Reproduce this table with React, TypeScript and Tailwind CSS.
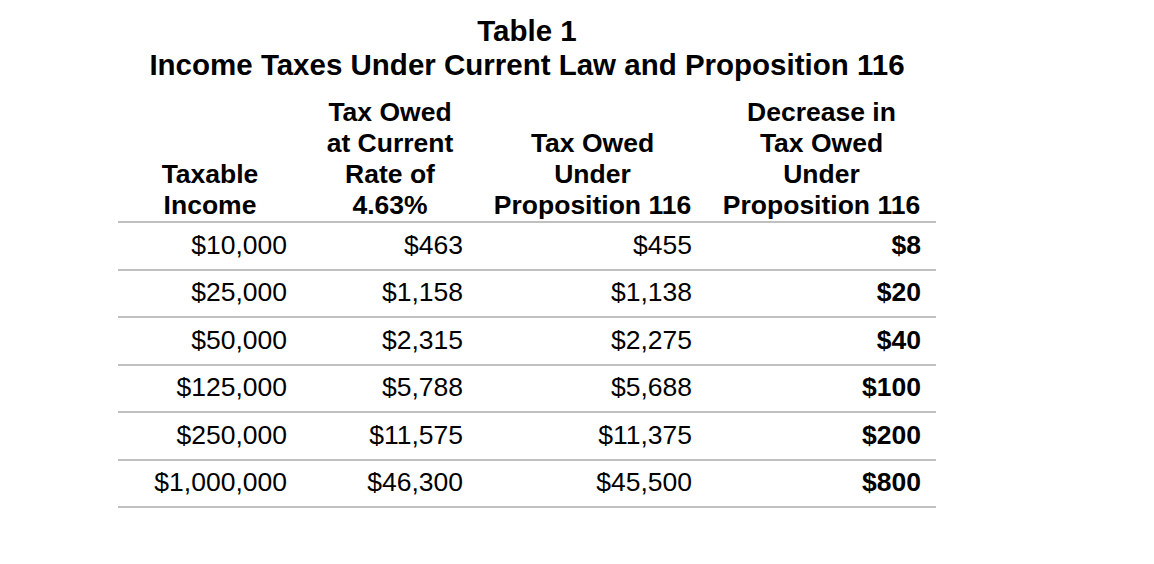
const rows: [string, string, string, string][] = [
  ["$10,000", "$463", "$455", "$8"],
  ["$25,000", "$1,158", "$1,138", "$20"],
  ["$50,000", "$2,315", "$2,275", "$40"],
  ["$125,000", "$5,788", "$5,688", "$100"],
  ["$250,000", "$11,575", "$11,375", "$200"],
  ["$1,000,000", "$46,300", "$45,500", "$800"],
];

const cols = "grid grid-cols-[184px_176px_229px_229px]";

export default function App() {
  return (
    <div className="min-h-[564px] w-[1154px] bg-white font-['Liberation_Sans',Arial,sans-serif] text-black">
      <div className="ml-[118px] w-[818px] pt-[14px]">
        <div className="text-center text-[29.5px] font-bold leading-[34px]">
          <div>Table 1</div>
          <div>Income Taxes Under Current Law and Proposition 116</div>
        </div>

        <div
          className={`${cols} mt-[15px] items-end border-b-2 border-[#c0c0c0] text-center text-[26.5px] font-bold leading-[31px]`}
        >
          <div>
            Taxable
            <br />
            Income
          </div>
          <div>
            Tax Owed
            <br />
            at Current
            <br />
            Rate of
            <br />
            4.63%
          </div>
          <div>
            Tax Owed
            <br />
            Under
            <br />
            Proposition 116
          </div>
          <div>
            Decrease in
            <br />
            Tax Owed
            <br />
            Under
            <br />
            Proposition 116
          </div>
        </div>

        {rows.map((r) => (
          <div
            key={r[0]}
            className={`${cols} h-[47.5px] items-center border-b-2 border-[#c0c0c0] text-right text-[26.5px]`}
          >
            <div className="pr-[15px]">{r[0]}</div>
            <div className="pr-[15px]">{r[1]}</div>
            <div className="pr-[15px]">{r[2]}</div>
            <div className="pr-[15px] font-bold">{r[3]}</div>
          </div>
        ))}
      </div>
    </div>
  );
}
